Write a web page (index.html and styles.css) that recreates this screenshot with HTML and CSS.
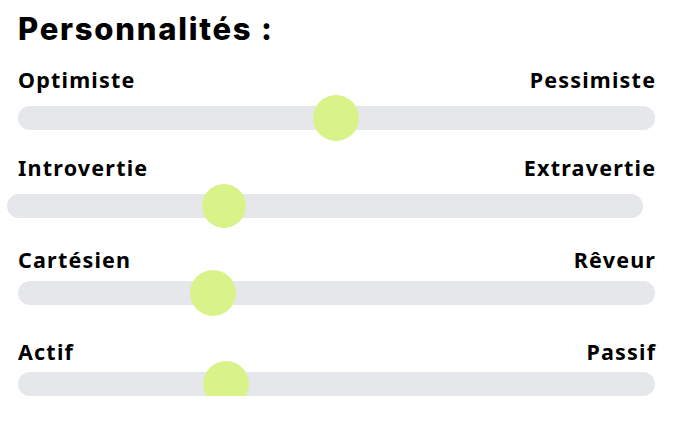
FILE: index.html
```html
<!DOCTYPE html>
<html lang="fr">
<head>
<meta charset="utf-8">
<link rel="stylesheet" href="styles.css">
</head>
<body>
<section class="panel">
  <h2 class="title">Personnalités :</h2>
  <div class="scale scale-1">
    <div class="labels"><span>Optimiste</span><span>Pessimiste</span></div>
    <div class="track"><div class="thumb" style="left:49.9%"></div></div>
  </div>
  <div class="scale scale-2">
    <div class="labels"><span>Introvertie</span><span>Extravertie</span></div>
    <div class="track track-shift"><div class="thumb thumb-small" style="left:34.1%"></div></div>
  </div>
  <div class="scale scale-3">
    <div class="labels"><span>Cartésien</span><span>Rêveur</span></div>
    <div class="track"><div class="thumb" style="left:30.6%"></div></div>
  </div>
  <div class="scale scale-4">
    <div class="labels"><span>Actif</span><span>Passif</span></div>
    <div class="track"><div class="thumb" style="left:32.7%"></div></div>
  </div>
</section>
</body>
</html>
```
FILE: styles.css
```css
html, body {
  margin: 0;
  padding: 0;
  background: #ffffff;
}
.panel {
  width: 637px;
  padding: 9px 0 0 18px;
  color: #000;
}
.title {
  margin: 0;
  font-family: Inter, "Noto Sans", sans-serif;
  font-weight: 800;
  font-size: 31px;
  line-height: 40px;
  letter-spacing: 1.75px;
}
.labels {
  display: flex;
  justify-content: space-between;
  font-family: "Noto Sans", sans-serif;
  font-weight: 700;
  font-size: 21.5px;
  line-height: 24px;
  letter-spacing: 1.2px;
}
.labels span:last-child {
  margin-right: -1.2px;
}
.track {
  position: relative;
  height: 24px;
  border-radius: 12px;
  background: #e5e7eb;
  margin-top: 14px;
}
.track-shift {
  margin-left: -11px;
  margin-right: 12px;
}
.thumb {
  position: absolute;
  top: 50%;
  width: 46px;
  height: 46px;
  border-radius: 50%;
  background: #d9f38a;
  transform: translate(-50%, -50%);
}
.thumb-small {
  width: 44px;
  height: 44px;
}
.scale-1 { margin-top: 19px; }
.scale-2 { margin-top: 26px; }
.scale-3 { margin-top: 30px; }
.scale-3 .track { margin-top: 9px; }
.scale-4 { margin-top: 35px; }
.scale-4 .track { margin-top: 8px; }
```
